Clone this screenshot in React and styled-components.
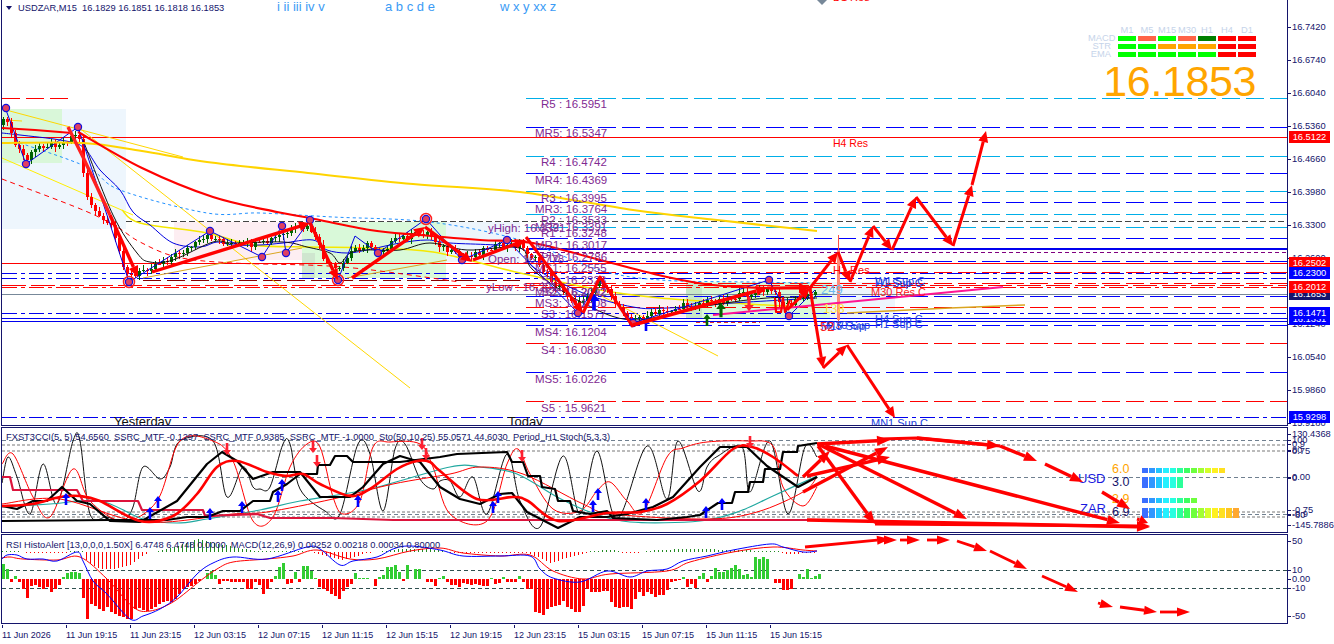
import React from 'react'
import styled, { createGlobalStyle } from 'styled-components'

const FONT = '"Liberation Sans", Arial, sans-serif'
const NAVY = '#14146b'

const GlobalStyle = createGlobalStyle`
  html, body {
    margin: 0;
    background: #fff;
  }
`

const Terminal = styled.div`
  width: 1334px;
  height: 644px;
  overflow: hidden;
  background: #fff;
  font-family: ${FONT};
  color: ${NAVY};
  display: flex;
  flex-direction: column;
  gap: 1px;
`

const Pane = styled.div`
  display: flex;
  height: ${p => p.$h}px;
  margin-left: 1px;
`

const Canvas = styled.div`
  position: relative;
  width: 1285px;
  overflow: hidden;
  border: 1px solid ${NAVY};
  border-top-width: ${p => (p.$noTop ? 0 : 1)}px;
`

const Layer = styled.svg`
  position: absolute;
  top: 0;
  left: 0;
`

const Axis = styled.div`
  position: relative;
  flex: 1;
  font-size: 9.3px;
`

// price scales and free labels sit where their value says
const Tick = styled.div.attrs(p => ({ style: { top: p.$y - p.$top } }))`
  position: absolute;
  left: 0;
  padding-left: 4px;
  line-height: 12px;
  transform: translateY(-50%);
  white-space: nowrap;
  &::before {
    content: '';
    position: absolute;
    left: 0;
    top: 6px;
    width: 3px;
    height: 1px;
    background: ${NAVY};
  }
`

const PriceTag = styled.div.attrs(p => ({ style: { top: p.$y } }))`
  position: absolute;
  left: 1px;
  width: 41px;
  height: 12px;
  line-height: 12px;
  transform: translateY(-50%);
  text-align: center;
  color: #fff;
  background: ${p => p.$bg};
`

const ChartText = styled.div.attrs(p => ({
  style: { left: p.$x - 2, top: p.$y - p.$top },
}))`
  position: absolute;
  transform: translateY(-50%);
  white-space: nowrap;
  line-height: 1.1;
  color: ${p => p.$c};
  font-size: ${p => p.$size}px;
`

const Title = styled.div`
  position: absolute;
  top: 3px;
  left: 4px;
  display: flex;
  align-items: center;
  gap: 6px;
  font-size: 9.3px;
  white-space: pre;
  &::before {
    content: '';
    border: 3px solid transparent;
    border-top: 4px solid ${NAVY};
    border-bottom: 0;
  }
`

const WaveLabels = styled.div`
  position: absolute;
  top: -1px;
  left: 275px;
  width: 300px;
  display: flex;
  font-size: 13px;
  color: #3b9bf5;
  span:nth-child(1) { width: 108px; }
  span:nth-child(2) { width: 115px; }
`

const Legend = styled.div`
  position: absolute;
  top: ${p => p.$top}px;
  left: 4px;
  font-size: 9.3px;
  white-space: pre;
`

const Dashboard = styled.div`
  position: absolute;
  top: 26px;
  left: 1080px;
  width: 174px;
  display: flex;
  flex-direction: column;
  align-items: flex-end;
`

const SignalGrid = styled.div`
  display: grid;
  grid-template-columns: 28px repeat(7, 18px);
  column-gap: 2px;
  row-gap: 3px;
  font-size: 9.3px;
  line-height: 5px;
  color: #c6d4ea;
  text-align: center;
`

const SignalHead = styled.div`
  height: 7px;
  line-height: 8px;
`

const SignalName = styled.div`
  text-align: right;
  padding-right: 5px;
  height: 5px;
`

const SignalCell = styled.div`
  height: 5px;
  background: ${p => p.$c};
`

const BigPrice = styled.div`
  margin-top: 3px;
  font-size: 43px;
  line-height: 42px;
  letter-spacing: -0.4px;
  color: #ffa500;
`

const MeterStack = styled.div`
  position: absolute;
  left: 1140px;
  top: 40px;
  display: flex;
  flex-direction: column;
`

const MeterRow = styled.div`
  display: flex;
  gap: 1px;
  margin-top: ${p => p.$mt}px;
`

const MeterCell = styled.div`
  width: 6px;
  height: ${p => p.$h}px;
  background: ${p => p.$c};
`

const TimeAxis = styled.div`
  display: flex;
  margin-left: 2px;
  height: 19px;
  font-size: 9px;
`

const TimeCell = styled.div`
  width: 64px;
  flex: none;
  padding-top: 5px;
  white-space: nowrap;
  position: relative;
  &::before {
    content: '';
    position: absolute;
    left: 0;
    top: 0;
    width: 1px;
    height: 3px;
    background: ${NAVY};
  }
`

/* helpers */
const pts = d => d.map(p => p.join(',')).join(' ')

const smooth = d => {
  let s = `M${d[0][0]} ${d[0][1]}`
  for (let i = 0; i < d.length - 1; i++) {
    const a = d[Math.max(i - 1, 0)], b = d[i], c = d[i + 1], e = d[Math.min(i + 2, d.length - 1)]
    s += `C${b[0] + (c[0] - a[0]) / 6} ${b[1] + (c[1] - a[1]) / 6} ${c[0] - (e[0] - b[0]) / 6} ${c[1] - (e[1] - b[1]) / 6} ${c[0]} ${c[1]}`
  }
  return s
}

const Line = ({ d, c, w = 1, dash }) => (
  <polyline points={pts(d)} fill="none" stroke={c} strokeWidth={w} strokeDasharray={dash} strokeLinejoin="round" />
)
const Curve = ({ d, c, w = 1, dash }) => (
  <path d={smooth(d)} fill="none" stroke={c} strokeWidth={w} strokeDasharray={dash} />
)
const HLine = ({ y, c, x1 = 2, x2 = 1287, w = 1, dash }) => (
  <line x1={x1} x2={x2} y1={y} y2={y} stroke={c} strokeWidth={w} strokeDasharray={dash} shapeRendering="crispEdges" />
)

const Arrow = ({ from, to, w = 3, head = 11, wing = 5 }) => {
  const dx = to[0] - from[0], dy = to[1] - from[1]
  const len = Math.hypot(dx, dy)
  const ux = dx / len, uy = dy / len
  const bx = to[0] - ux * head, by = to[1] - uy * head
  return (
    <g>
      <line x1={from[0]} y1={from[1]} x2={bx} y2={by} stroke="#ff0000" strokeWidth={w} />
      <polygon fill="#ff0000" points={`${to[0]},${to[1]} ${bx - uy * wing},${by + ux * wing} ${bx + uy * wing},${by - ux * wing}`} />
    </g>
  )
}

const Path3 = ({ d, w = 3 }) => d.slice(0, -1).map((p, i) => <Arrow key={i} from={p} to={d[i + 1]} w={w} />)

const UpMark = ({ x, y, c = '#0000ff', s = 1 }) => (
  <polygon fill={c} points={pts([[x, y - 6 * s], [x + 4 * s, y - 1], [x + 1.3 * s, y - 1], [x + 1.3 * s, y + 6 * s], [x - 1.3 * s, y + 6 * s], [x - 1.3 * s, y - 1], [x - 4 * s, y - 1]])} />
)
const DownMark = ({ x, y, c = '#ff2030', s = 1 }) => (
  <polygon fill={c} points={pts([[x, y + 6 * s], [x + 4 * s, y + 1], [x + 1.3 * s, y + 1], [x + 1.3 * s, y - 6 * s], [x - 1.3 * s, y - 6 * s], [x - 1.3 * s, y + 1], [x - 4 * s, y + 1]])} />
)

const Pivot = ({ x, y, big }) => (
  <g>
    {big && <circle cx={x} cy={y} r={5.5} fill="none" stroke="#ff2020" strokeWidth={1.5} />}
    <circle cx={x} cy={y} r={3.6} fill="#e04060" stroke="#1010e0" strokeWidth={1.2} />
  </g>
)

const noise = i => {
  const v = Math.sin(i * 12.9898) * 43758.5453
  return v - Math.floor(v)
}

const interp = (keys, x) => {
  for (let i = 0; i < keys.length - 1; i++) {
    if (x <= keys[i + 1][0]) {
      const t = (x - keys[i][0]) / (keys[i + 1][0] - keys[i][0] || 1)
      return keys[i][1] + (keys[i + 1][1] - keys[i][1]) * t
    }
  }
  return keys[keys.length - 1][1]
}

const priceY = p => 27 + (16.742 - p) * 480
const priceLabel = p => p.toFixed(4)

/* main chart data */
const LEVEL = '18 6'
const DOTDASH = '15 4 4 4'
const levels = [
  [16.5951, '#00aee8'], [16.5347, '#0000ff'], [16.4742, '#00aee8'], [16.4369, '#0000ff'],
  [16.3995, '#00aee8'], [16.3764, '#0000ff'], [16.3533, '#00aee8'], [16.3248, '#00aee8'],
  [16.3017, '#0000ff'], [16.2555, '#0000ff'], [16.2323, '#ff0000'], [16.2092, '#ff0000'],
  [16.1808, '#0000ff'], [16.1577, '#ff0000'], [16.1204, '#0000ff'], [16.083, '#ff0000'],
  [16.0226, '#0000ff'], [15.9621, '#ff0000'],
]

const pivotLabels = [
  [541, 104, 'R5 : 16.5951'], [535, 133, 'MR5: 16.5347'], [541, 162, 'R4 : 16.4742'],
  [535, 180, 'MR4: 16.4369'], [541, 198, 'R3 : 16.3995'], [535, 209, 'MR3: 16.3764'],
  [541, 220, 'R2 : 16.3533'], [535, 227, 'MR2: 16.3391'], [541, 233, 'R1 : 16.3248'],
  [535, 245, 'MR1: 16.3017'], [541, 257, 'PIV: 16.2786'], [535, 268, 'MS1: 16.2555'],
  [541, 280, 'S1 : 16.2323'], [535, 292, 'MS2: 16.2092'], [541, 292, 'S2 : 16.2012'],
  [535, 303, 'MS3: 16.1808'], [541, 314, 'S3 : 16.1577'], [535, 332, 'MS4: 16.1204'],
  [541, 350, 'S4 : 16.0830'], [535, 379, 'MS5: 16.0226'], [541, 408, 'S5 : 15.9621'],
  [488, 228, 'yHigh: 16.3391'], [488, 259, 'Open: 16.2778'], [486, 287, 'yLow : 16.2012'],
]

const sideLabels = [
  [833, -3, 'D1 Res', '#ff0000', 11], [833, 144, 'H4 Res', '#ff0000', 10.5], [833, 270, 'H1 Res', '#ff0000', 11],
  [875, 281, 'W1 Sup C', '#2040e0', 11], [875, 283, 'H1 Sup C', '#2040e0', 11], [871, 292, 'M30 Res C', '#ff2020', 11],
  [875, 319, 'H4 Sup C', '#2040e0', 11], [875, 324, 'H1 Sup C', '#2040e0', 11], [821, 326, 'M15 Sup', '#2040e0', 11],
  [826, 325, 'M30 Sup', '#2040e0', 11], [871, 423, 'MN1 Sup C', '#2040e0', 11],
  [821, 290, '249', '#6ab8f0', 13], [823, 309, '138', '#ffe040', 13], [820, 327, '52', '#ff2020', 13],
  [114, 422, 'Yesterday', '#111', 13], [508, 422, 'Today', '#111', 13],
]

const priceKeys = [
  [2, 125], [6, 115], [12, 140], [26, 160], [40, 145], [62, 143], [78, 132], [86, 195], [100, 220], [110, 225],
  [125, 270], [133, 278], [142, 270], [160, 262], [190, 248], [210, 236], [230, 245], [260, 245], [282, 235],
  [300, 228], [310, 228], [325, 262], [338, 272], [352, 250], [365, 245], [380, 250], [400, 238], [426, 232],
  [445, 250], [462, 258], [490, 247], [520, 245], [535, 260], [555, 285], [578, 305], [600, 280], [610, 298],
  [633, 320], [660, 312], [690, 305], [720, 300], [760, 292], [770, 290], [785, 305], [815, 293],
]

const candles = []
{
  let prev = 125
  for (let i = 0; i < 204; i++) {
    const x = 3 + 4 * i
    const c = interp(priceKeys, x) + (noise(i) - 0.5) * 7
    const top = Math.min(prev, c), bot = Math.max(prev, c)
    candles.push({ x, top, bot, up: c < prev, hi: top - noise(i + 300) * 4 - 1, lo: bot + noise(i + 700) * 4 + 1 })
    prev = c
  }
}

const pivots = [
  [6, 108], [26, 164], [78, 127], [129, 282, 1], [210, 231], [262, 257], [282, 226], [286, 253], [310, 220],
  [338, 280, 1], [378, 253], [426, 219, 1], [462, 260], [507, 240], [578, 313], [633, 323], [769, 280], [789, 316],
]

const zigBlue = [
  [6, 110], [26, 164], [78, 127], [129, 282], [210, 231], [262, 257], [282, 226], [286, 253], [310, 220], [338, 280],
  [355, 236], [378, 253], [426, 219], [462, 260], [507, 240], [578, 313], [600, 280], [633, 323], [769, 280], [789, 316], [815, 290],
]
const maBlue = [
  [2, 133], [20, 135], [60, 140], [83, 147], [100, 170], [120, 190], [133, 212], [150, 225], [173, 243], [200, 247], [217, 242],
  [233, 245], [260, 245], [283, 243], [313, 240], [327, 250], [347, 253], [367, 250], [400, 243], [427, 240], [450, 243],
  [520, 248], [533, 267], [583, 293], [633, 307], [667, 308], [733, 303], [783, 300], [815, 298],
]
const maBlack = [
  [83, 140], [113, 215], [137, 253], [150, 262], [173, 260], [213, 242], [233, 243], [283, 242], [307, 247], [330, 253], [340, 263],
  [350, 253], [367, 250], [400, 250], [430, 243], [467, 250], [520, 248], [533, 270], [583, 303], [633, 320], [700, 307], [767, 298], [817, 298],
]
const maYellow = [
  [122, 210], [140, 223], [207, 233], [253, 245], [310, 247], [367, 248], [433, 252], [520, 273], [600, 290], [660, 298], [733, 303], [800, 307],
]
const maRed = [
  [78, 132], [142, 168], [213, 197], [277, 212], [310, 218], [370, 230], [420, 235], [480, 240], [533, 243], [600, 260], [667, 277], [713, 285], [767, 288], [810, 287],
]
const maGold = [
  [2, 143], [83, 143], [142, 151], [207, 162], [308, 173], [413, 184], [520, 192], [633, 210], [717, 220], [817, 231],
]
const dotBlue = [[20, 143], [87, 167], [120, 190], [207, 213], [260, 213], [333, 217], [430, 222], [520, 240], [600, 270], [660, 280], [750, 282], [815, 283]]
const redDash = [[2, 179], [83, 210], [117, 227], [140, 242], [177, 257], [233, 263], [343, 267], [460, 282]]

const Candles = () => candles.map(k => (
  <g key={k.x} fill={k.up ? '#006400' : '#ff0000'} shapeRendering="crispEdges">
    <rect x={k.x} y={k.hi} width={1} height={k.lo - k.hi} />
    <rect x={k.x - 1} y={k.top} width={3} height={Math.max(k.bot - k.top, 1)} />
  </g>
))

const MainBase = () => (
  <Layer width={1285} height={426} viewBox="2 0 1285 426">
    <g shapeRendering="crispEdges">
      <rect x={2} y={109} width={124} height={120} fill="#eef6fd" />
      <rect x={2} y={109} width={60} height={54} fill="#d9f7d9" />
      <rect x={174} y={222} width={128} height={38} fill="#fdeef2" />
      <rect x={302} y={222} width={144} height={56} fill="#d9f9d9" />
      <rect x={302} y={253} width={13} height={25} fill="#cfe6cf" />
      <rect x={446} y={222} width={74} height={40} fill="#edf5fc" />
      <rect x={600} y={293} width={86} height={24} fill="#fdeef2" />
      <rect x={686} y={282} width={144} height={36} fill="#d9f9d9" />
      <rect x={686} y={282} width={16} height={36} fill="#c8e8c8" />
      <rect x={830} y={282} width={65} height={36} fill="#edf5fc" />
    </g>
    {levels.map(([p, c]) => (
      <HLine key={p} y={Math.round(priceY(p)) + 0.5} c={c} x1={526} dash={LEVEL} />
    ))}
    <HLine y={137.5} c="#ff0000" />
    <HLine y={221.5} c="#444" x1={126} dash="6 3" />
    <HLine y={249} c="#0000ee" x1={526} w={2} />
    <HLine y={252.5} c="#800080" x1={526} dash="4 3" />
    <HLine y={263.5} c="#ff0000" />
    <HLine y={273.5} c="#0000ee" dash={DOTDASH} />
    <HLine y={278.5} c="#0000ee" dash={DOTDASH} />
    <HLine y={285.5} c="#ff0000" dash="24 5" />
    <HLine y={287.5} c="#ff0000" dash={DOTDASH} />
    <HLine y={294.5} c="#778899" />
    <HLine y={313.5} c="#0000ee" dash={DOTDASH} />
    <HLine y={318.5} c="#0000ee" />
    <HLine y={321.5} c="#0000ee" />
    <HLine y={417.5} c="#0000ee" dash={DOTDASH} />
    <HLine y={98.5} c="#ff0000" x2={68} dash="18 6" />
    <HLine y={280.5} c="#8b0000" x1={143} x2={520} dash="18 6" />
    <HLine y={322.5} c="#e03030" x1={696} x2={760} dash="4 3" />

    <Line d={[[6, 110], [183, 157]]} c="#ffd700" />
    <Line d={[[2, 158], [133, 215]]} c="#ffee00" />
    <Line d={[[78, 127], [410, 388]]} c="#ffd700" />
    <Line d={[[590, 290], [718, 356]]} c="#ffd700" />
    <Line d={[[6, 120], [22, 121]]} c="#ffd700" />
    <Line d={[[143, 278], [302, 248]]} c="#daa520" />
    <Line d={[[347, 278], [447, 260]]} c="#daa520" />
    <Line d={[[847, 313], [950, 308], [1025, 305]]} c="#daa520" w={1.5} />
    <Curve d={dotBlue} c="#2090ff" dash="3 3" />
    <Curve d={redDash} c="#ff0000" dash="5 4" />
    <Curve d={maYellow} c="#f5e800" w={1.5} />
    <Curve d={maBlue} c="#0000e0" />
    <Candles />
    <Curve d={maBlack} c="#111" />
    <Line d={zigBlue} c="#0000e0" />
    <Curve d={maGold} c="#ffd400" w={2.1} />
    <Line d={[[2, 128], [35, 130], [72, 133]]} c="#ff0000" w={2} />
    <Curve d={maRed} c="#ff0000" w={2.2} />
    <Line d={[[838.5, 235], [838.5, 330]]} c="#ff5040" />
    <Line d={[[838.5, 250], [838.5, 320]]} c="#ff8a78" w={3} />
    <Line d={[[713, 315], [1003, 287]]} c="#ff1493" w={2} />
  </Layer>
)

const MainTop = () => (
  <Layer width={1285} height={426} viewBox="2 0 1285 426">
    <polygon fill="#778899" points="817,0 827,0 822,5" />
    {pivots.map(([x, y, big]) => <Pivot key={x} x={x} y={y} big={big} />)}
    <UpMark x={594} y={302} s={1.4} />
    <UpMark x={646} y={325} />
    <UpMark x={721} y={310} c="#006400" s={1.2} />
    <UpMark x={707} y={320} c="#006400" />
    <DownMark x={749} y={304} s={1.2} />
    <Line d={[[775, 298], [776, 312], [781, 312], [783, 298], [785, 312], [790, 300]]} c="#ff0000" w={2.2} />
    <Line d={[[68, 127], [83, 157], [110, 215]]} c="#ff2020" w={3.4} />
    <Arrow from={[110, 215]} to={[138, 277]} w={3.4} />
    <Arrow from={[152, 272]} to={[310, 223]} w={3.4} />
    <Arrow from={[310, 223]} to={[338, 280]} w={3.4} />
    <Arrow from={[352, 278]} to={[425, 227]} w={3.4} />
    <Arrow from={[425, 227]} to={[472, 262]} w={3.4} />
    <Arrow from={[473, 260]} to={[526, 240]} w={3.4} />
    <Arrow from={[526, 237]} to={[583, 313]} w={3} />
    <Line d={[[583, 313], [600, 277], [633, 327]]} c="#ff0000" w={3} />
    <Arrow from={[633, 325]} to={[767, 288]} w={3.6} />
    <Arrow from={[767, 288]} to={[810, 288]} w={3} />
    <Path3 d={[[787, 310], [810, 288], [838, 252], [850, 282], [873, 226], [892, 250], [916, 197], [953, 246], [972, 185], [986, 131]]} />
    <Path3 d={[[810, 288], [823, 368], [847, 345], [895, 418]]} />
  </Layer>
)

const axisPrices = [16.742, 16.674, 16.604, 16.536, 16.466, 16.398, 16.33, 16.26, 16.124, 16.054, 15.986, 15.918]
const tags = [
  [16.5122, '#ff0000'], [16.2502, '#ff0000'], [16.23, '#0000ff'], [16.1853, '#14146b'], [16.2012, '#ff0000'],
  [16.1331, '#0000ff'], [16.1471, '#0000ff'], [15.9298, '#0000ff'],
]

const periods = ['M1', 'M5', 'M15', 'M30', 'H1', 'H4', 'D1']
const LIME = '#00ff00', TOM = '#ff6347', RED = '#ff0000', ORG = '#ffa500'
const signals = [
  ['MACD', [LIME, TOM, LIME, TOM, '#008000', RED, RED]],
  ['STR', [LIME, LIME, ORG, ORG, ORG, RED, RED]],
  ['EMA', [LIME, LIME, LIME, LIME, LIME, RED, RED]],
]

const MainPane = () => (
  <Pane $h={427}>
    <Canvas $noTop>
      <MainBase />
      {pivotLabels.map(([x, y, t]) => <ChartText key={t} $x={x} $y={y} $top={0} $c="#7f2a92" $size={11.5}>{t}</ChartText>)}
      {sideLabels.map(([x, y, t, c, s], i) => <ChartText key={i} $x={x} $y={y} $top={0} $c={c} $size={s}>{t}</ChartText>)}
      <MainTop />
      <Title>USDZAR,M15  16.1829 16.1851 16.1818 16.1853</Title>
      <WaveLabels>
        <span>i ii iii iv v</span>
        <span>a b c d e</span>
        <span>w x y xx z</span>
      </WaveLabels>
      <Dashboard>
        <SignalGrid>
          <SignalHead />
          {periods.map(p => <SignalHead key={p}>{p}</SignalHead>)}
          {signals.map(([name, cells]) => (
            <React.Fragment key={name}>
              <SignalName>{name}</SignalName>
              {cells.map((c, i) => <SignalCell key={i} $c={c} />)}
            </React.Fragment>
          ))}
        </SignalGrid>
        <BigPrice>16.1853</BigPrice>
      </Dashboard>
    </Canvas>
    <Axis>
      {axisPrices.map(p => <Tick key={p} $y={priceY(p)} $top={0}>{priceLabel(p)}</Tick>)}
      {tags.map(([p, c]) => <PriceTag key={p} $y={priceY(p)} $bg={c}>{priceLabel(p)}</PriceTag>)}
    </Axis>
  </Pane>
)

/* oscillator pane */
const thinBlack = [
  [2, 484], [8, 458], [17, 478], [30, 515], [43, 465], [57, 505], [73, 442], [80, 442], [90, 515], [107, 518], [123, 522], [133, 508], [143, 468],
  [160, 480], [170, 468], [180, 442], [213, 442], [227, 498], [243, 468], [253, 488], [260, 490], [270, 488], [283, 445], [290, 445], [300, 490],
  [325, 512], [340, 515], [358, 445], [370, 455], [383, 512], [395, 450], [405, 445], [420, 480], [433, 490], [440, 482], [450, 482], [460, 498],
  [473, 478], [487, 515], [507, 455], [520, 502], [540, 528], [563, 457], [580, 515], [597, 452], [617, 520], [647, 447], [667, 500], [678, 442],
  [698, 492], [707, 468], [718, 457], [742, 448], [750, 493], [770, 442], [788, 515], [805, 448], [817, 458],
]
const thinRed = [
  [2, 465], [13, 455], [33, 498], [50, 518], [73, 470], [90, 502], [123, 522], [157, 502], [180, 442], [213, 442], [233, 462], [253, 522], [273, 518],
  [290, 468], [307, 445], [320, 448], [333, 498], [343, 515], [360, 502], [373, 448], [390, 443], [420, 445], [433, 468], [450, 515], [487, 522],
  [507, 465], [518, 450], [530, 475], [553, 510], [580, 512], [597, 492], [610, 483], [627, 502], [643, 513], [667, 458], [683, 449], [707, 443],
  [747, 442], [773, 447], [783, 488], [803, 507], [817, 488],
]
const boldBlack = [
  [2, 507], [17, 510], [33, 502], [47, 502], [62, 488], [77, 502], [90, 505], [110, 522], [140, 523], [177, 502], [207, 465], [222, 453], [237, 462],
  [253, 480], [273, 473], [300, 473], [320, 498], [350, 498], [363, 488], [383, 465], [400, 457], [420, 463], [440, 488], [460, 500], [480, 505],
  [500, 495], [512, 494], [527, 513], [558, 529], [580, 518], [607, 518], [627, 515], [653, 508], [673, 498], [700, 468], [720, 448], [747, 448],
  [767, 467], [798, 488], [817, 478],
]
const stepBlack = [
  [2, 522], [110, 521], [167, 521], [187, 518], [207, 518], [223, 512], [240, 512], [253, 502], [270, 502], [273, 493], [287, 485], [300, 475], [317, 475],
  [318, 466], [330, 466], [335, 457], [347, 457], [353, 463], [400, 463], [440, 458], [457, 455], [507, 453], [512, 463], [523, 463], [528, 477], [540, 477],
  [542, 488], [555, 490], [558, 502], [570, 502], [573, 512], [590, 515], [607, 512], [613, 519], [657, 521], [687, 518], [700, 516], [718, 504], [732, 504],
  [735, 493], [748, 493], [750, 483], [763, 483], [765, 470], [780, 470], [783, 453], [797, 453], [798, 447], [817, 444],
]
const boldRed = [
  [2, 507], [33, 505], [60, 498], [80, 497], [100, 502], [140, 522], [173, 517], [197, 495], [217, 468], [237, 462], [267, 473], [287, 477], [303, 475],
  [320, 485], [350, 497], [370, 490], [397, 470], [417, 462], [430, 463], [440, 472], [477, 500], [513, 498], [528, 502], [558, 522], [607, 514], [640, 513],
  [667, 505], [700, 482], [733, 450], [752, 448], [773, 458], [798, 477],
]
const crimson = [
  [2, 478], [10, 478], [13, 491], [77, 491], [83, 502], [138, 502], [142, 511], [203, 511], [205, 517], [257, 515], [270, 519], [333, 519], [393, 521], [817, 521],
]
const teal = [
  [2, 508], [50, 505], [100, 502], [143, 520], [177, 524], [207, 520], [260, 511], [300, 502], [370, 490], [450, 468], [480, 468], [517, 475], [557, 498],
  [590, 513], [630, 523], [700, 522], [740, 512], [773, 497], [817, 477],
]
const redMa = [
  [2, 505], [60, 500], [143, 523], [233, 515], [267, 513], [333, 500], [393, 485], [450, 475], [480, 468], [523, 475], [583, 505], [613, 515], [707, 520],
  [757, 513], [803, 493], [817, 478],
]
const upMarks = [
  [66, 500], [158, 503], [150, 514], [210, 515], [242, 508], [278, 497], [282, 486], [358, 502], [498, 498], [493, 508], [598, 495], [593, 507], [646, 505], [706, 513], [722, 505],
]
const downMarks = [[227, 450], [313, 448], [317, 462], [422, 445], [426, 455], [522, 457], [750, 443]]

const GREY_DOT = '3 2'
const oscAxis = [
  [435, '130.4368'], [441, '100'], [445, '0.9'], [451, '80'], [451.5, '0.75'], [478, '0.00'], [478.5, '0'],
  [511, '-0.75'], [515, '-0.9'], [516, '-80'], [526, '-145.7886'],
]

const strength = ['#3a6fff', '#2f96ff', '#20c6ff', '#25f0ff', '#26ffe0', '#2bff9a', '#3dff60', '#6dff3c', '#a2ff32', '#d4ff2a', '#fff020', '#ffe020', '#ffc620', '#ffa830']
const meterRows = [
  { n: 12, h: 5, mt: 0 },
  { n: 6, h: 11, mt: 4 },
  { n: 8, h: 5, mt: 10 },
  { n: 14, h: 10, mt: 5 },
]

const oscTexts = [
  [1078, 480, 'USD', '#1a1ae0', 13], [1112, 471, '6.0', '#ffa500', 12.5], [1112, 484, '3.0', NAVY, 12.5],
  [1080, 510, 'ZAR', '#1a1ae0', 13], [1112, 501, '2.9', '#ffa500', 12.5], [1112, 514, '6.9', NAVY, 12.5],
]

const OscPane = () => (
  <Pane $h={106}>
    <Canvas>
      <Layer width={1285} height={104} viewBox="2 429 1285 104">
        <HLine y={441.5} c="#708090" dash="4 3" />
        <HLine y={445.5} c="#bbb" w={2} dash={GREY_DOT} />
        <HLine y={451.5} c="#bbb" w={2} dash={GREY_DOT} />
        <HLine y={478.5} c="#708090" dash="4 3" />
        <HLine y={512.5} c="#bbb" w={2} dash={GREY_DOT} />
        <HLine y={515} c="#708090" dash="4 3" />
        <HLine y={517.5} c="#bbb" w={2} dash={GREY_DOT} />
        <Curve d={thinBlack} c="#111" />
        <Curve d={thinRed} c="#ff0000" />
        <Curve d={teal} c="#20a8a0" w={1.2} />
        <Curve d={redMa} c="#ff0000" />
        <Line d={crimson} c="#dc143c" w={2.2} />
        <Line d={stepBlack} c="#000" w={2.2} />
        <Line d={boldBlack} c="#000" w={2.2} />
        <Curve d={boldRed} c="#ff0000" w={2.6} />
        {upMarks.map(([x, y]) => <UpMark key={x} x={x} y={y} />)}
        {downMarks.map(([x, y]) => <DownMark key={x} x={x} y={y} />)}
      </Layer>
      <Legend $top={4}>FXST3CCI(5, 5) 54.6560  SSRC_MTF -0.1297  SSRC_MTF 0.9385  SSRC_MTF -1.0000  Sto(50,10,25) 55.0571 44.6030  Period_H1 Stoch(5,3,3)</Legend>
      {oscTexts.map(([x, y, t, c, s]) => <ChartText key={t} $x={x} $y={y} $top={429} $c={c} $size={s}>{t}</ChartText>)}
      <MeterStack>
        {meterRows.map((r, i) => (
          <MeterRow key={i} $mt={r.mt}>
            {strength.slice(0, r.n).map(c => <MeterCell key={c} $c={c} $h={r.h} />)}
          </MeterRow>
        ))}
      </MeterStack>
      <Layer width={1285} height={104} viewBox="2 429 1285 104">
        <Arrow from={[817, 445]} to={[890, 441]} w={3.4} head={13} />
        <Line d={[[880, 440], [917, 439], [1000, 447]]} c="#ff0000" w={3} />
        <Arrow from={[917, 439]} to={[1000, 447]} w={3.4} head={13} />
        <Arrow from={[1000, 447]} to={[1037, 462]} w={3.4} head={13} />
        <Arrow from={[1045, 465]} to={[1083, 483]} w={3.4} head={13} />
        <Arrow from={[1102, 493]} to={[1130, 510]} w={3.4} head={13} />
        <Arrow from={[1137, 520]} to={[1148, 524]} w={3} head={9} />
        <Arrow from={[818, 445]} to={[967, 520]} w={3.4} head={13} />
        <Arrow from={[825, 447]} to={[1120, 524]} w={3.4} head={13} />
        <Arrow from={[818, 447]} to={[875, 525]} w={3.4} head={13} />
        <Arrow from={[803, 493]} to={[888, 448]} w={3.4} head={13} />
        <Arrow from={[803, 478]} to={[830, 452]} w={3.4} head={13} />
        <Arrow from={[807, 477]} to={[890, 458]} w={3.4} head={13} />
        <Arrow from={[807, 521]} to={[1150, 528]} w={3.4} head={13} />
        <Arrow from={[875, 525]} to={[1150, 527]} w={3} head={13} />
      </Layer>
    </Canvas>
    <Axis>
      {oscAxis.map(([y, t]) => <Tick key={t} $y={y} $top={428}>{t}</Tick>)}
    </Axis>
  </Pane>
)

/* rsi / macd pane */
const histoA = [
  15, 10, -3, 3, -3, -10, -19, -7, -6, -8, -10, -8, -13, -10, -6, 2, 6, 7, 7, 6, -19, -40, -25, -27, -30, -32, -28, -33, -35, -37, -38, -40, -40, -30, -29, -31,
  -32, -30, -28, -25, -23, -22, -23, -20, -15, -10, -8, -7, -5, -2, 0, 6, 8, 4, -5, -2, -2, -3, -3, -3, -3, -10, -10, -3, -6, -15, -10, -3, 3, 12, 16, -5, -4, 7,
  -3, 13, 13, 8, 1, -8, -10, -12, -15, -17, -20, -12, -8, -5, 6, 1, 1, 1, 0, -7, 2, 4, 12, 12, 14, 7, -2, 14, 0, 10, 10, 0, -3, -3, -7, 1, 3,
]
const histoB = [
  3, -3, -6, -6, -8, -4, -5, -6, -5, -6, -7, -7, 1, -5, -4, 2, -3, -3, -3, 3, -3, -10, -10, -33, -34, -36, -30, -28, -27, -26, -22, -28, -30, -33, -33, -27, -10,
  -13, -13, -13, -12, -12, -23, -28, -29, -28, -28, -30, -20, -13, -17, -13, -15, -18, -16, -16, -11, -3, -2, -1, 2, -8, -5, -9, 3, 6, -3, 3, 11, 7, 7, 9, 11, 14, 10,
  4, 5, 2, 22, 20, 22, 20, 0, -4, -4, -11, -11, -10, 0, 5, 2, 10, 1, 3, 5,
]
const rsiKeys = [
  [2, 1], [20, 1], [25, -1], [67, -1], [70, 1], [82, 1], [87, -10], [100, -17], [112, -17], [130, -13], [140, -5], [147, -1], [157, 1], [172, 4], [197, 13], [233, 5],
  [255, 1], [300, 1], [315, -1], [343, -8], [367, -1], [385, 1], [400, 3], [427, 3], [443, 1], [447, -1], [526, -1], [535, -4], [550, -11], [570, -5], [585, -1], [590, 1],
  [610, 2], [618, 1], [620, -1], [636, -1], [645, 1], [680, 3], [700, 3], [770, 1], [778, 1], [785, -2], [815, -1],
]
const rsiBars = Array.from({ length: 204 }, (_, i) => {
  const x = 2 + 4 * i
  return { x, v: Math.round(interp(rsiKeys, x)) }
})

const macdBlue = [
  [2, 560], [7, 556], [17, 556], [27, 560], [43, 560], [57, 562], [77, 553], [83, 562], [93, 582], [107, 595], [130, 620], [143, 617], [160, 610], [177, 598], [197, 575],
  [213, 564], [233, 558], [267, 560], [307, 548], [320, 550], [340, 566], [353, 562], [377, 558], [393, 550], [410, 547], [440, 551], [463, 557], [500, 557], [530, 557],
  [540, 570], [553, 579], [580, 583], [607, 572], [630, 578], [647, 572], [667, 570], [683, 562], [707, 557], [733, 551], [770, 545], [783, 548], [803, 553], [817, 552],
]
const macdRed = [
  [2, 559], [10, 558], [23, 560], [57, 561], [80, 558], [107, 580], [133, 608], [150, 612], [173, 603], [200, 582], [217, 570], [233, 563], [267, 560], [293, 557], [317, 551],
  [350, 560], [377, 560], [410, 552], [440, 549], [463, 554], [500, 557], [530, 556], [553, 572], [583, 580], [610, 575], [667, 572], [690, 563], [733, 553], [773, 548], [803, 551], [817, 552],
]
const macdAxis = [[542, '50'], [571, '10'], [580, '0.00'], [589, '-10'], [617, '-50']]

const Histo = ({ values, start }) => values.map((v, i) => v !== 0 && (
  <rect
    key={i}
    x={start + 4 * i}
    y={v > 0 ? 580 - v : 580}
    width={3}
    height={Math.abs(v)}
    fill={v > 0 ? '#32cd32' : '#ff0000'}
    shapeRendering="crispEdges"
  />
))

const macdArrows = [
  [[805, 548], [890, 540]], [[880, 541], [897, 541]], [[900, 541], [920, 541]], [[927, 541], [950, 541]], [[957, 542], [987, 552]],
  [[990, 552], [1027, 570]], [[1042, 577], [1078, 593]], [[1098, 604], [1113, 608]], [[1120, 608], [1157, 613]], [[1160, 613], [1190, 613]],
]

const MacdPane = () => (
  <Pane $h={90}>
    <Canvas>
      <Layer width={1285} height={88} viewBox="2 536 1285 88">
        <HLine y={571.5} c="#2f4f4f" dash="4 3" />
        <HLine y={589.5} c="#2f4f4f" dash="4 3" />
        <Histo values={histoA} start={2} />
        <Histo values={histoB} start={442} />
        {rsiBars.map(b => b.v !== 0 && (
          <rect
            key={b.x}
            x={b.x}
            y={b.v > 0 ? 553 - b.v : 553}
            width={1}
            height={Math.abs(b.v)}
            fill={b.v > 0 ? '#228b22' : '#ff0000'}
            shapeRendering="crispEdges"
          />
        ))}
        <Curve d={macdRed} c="#ff0000" />
        <Curve d={macdBlue} c="#0000ff" />
        {macdArrows.map(([from, to]) => <Arrow key={from[0]} from={from} to={to} w={2.8} head={13} wing={4.5} />)}
      </Layer>
      <Legend $top={5}>RSI HistoAlert [13,0,0,0,1.50X] 6.4748 6.4748 0.0000  MACD(12,26,9) 0.00252 0.00218 0.00034 0.80000</Legend>
    </Canvas>
    <Axis>
      {macdAxis.map(([y, t]) => <Tick key={t} $y={y} $top={535}>{t}</Tick>)}
    </Axis>
  </Pane>
)

const times = [
  '11 Jun 2026', '11 Jun 19:15', '11 Jun 23:15', '12 Jun 03:15', '12 Jun 07:15', '12 Jun 11:15', '12 Jun 15:15',
  '12 Jun 19:15', '12 Jun 23:15', '15 Jun 03:15', '15 Jun 07:15', '15 Jun 11:15', '15 Jun 15:15',
]

function App() {
  return (
    <Terminal>
      <GlobalStyle />
      <MainPane />
      <OscPane />
      <MacdPane />
      <TimeAxis>
        {times.map(t => <TimeCell key={t}>{t}</TimeCell>)}
      </TimeAxis>
    </Terminal>
  )
}

export default App
